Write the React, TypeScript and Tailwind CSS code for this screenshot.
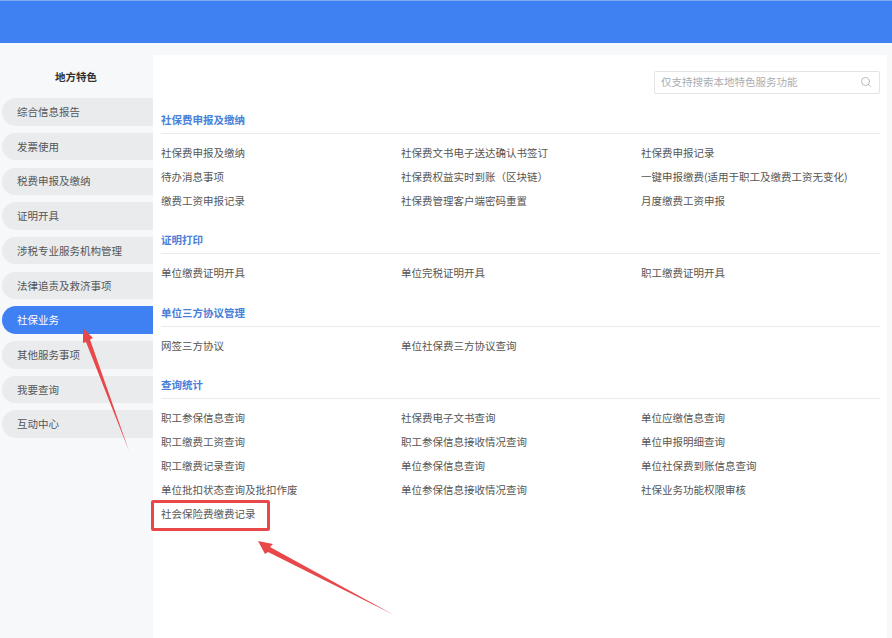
import React from "react";
import { Search } from "lucide-react";

const sidebar = ["综合信息报告","发票使用","税费申报及缴纳","证明开具","涉税专业服务机构管理","法律追责及救济事项","社保业务","其他服务事项","我要查询","互动中心"];

const sections: { title: string; items: string[] }[] = [
  { title: "社保费申报及缴纳", items: ["社保费申报及缴纳","社保费文书电子送达确认书签订","社保费申报记录","待办消息事项","社保费权益实时到账（区块链）","一键申报缴费(适用于职工及缴费工资无变化)","缴费工资申报记录","社保费管理客户端密码重置","月度缴费工资申报"] },
  { title: "证明打印", items: ["单位缴费证明开具","单位完税证明开具","职工缴费证明开具"] },
  { title: "单位三方协议管理", items: ["网签三方协议","单位社保费三方协议查询"] },
  { title: "查询统计", items: ["职工参保信息查询","社保费电子文书查询","单位应缴信息查询","职工缴费工资查询","职工参保信息接收情况查询","单位申报明细查询","职工缴费记录查询","单位参保信息查询","单位社保费到账信息查询","单位批扣状态查询及批扣作废","单位参保信息接收情况查询","社保业务功能权限审核","社会保险费缴费记录"] },
];

export default function App() {
  return (
    <div className="relative h-[638px] w-[892px] overflow-hidden bg-[#f6f8fa] text-[10.5px] text-[#555555] font-['Noto_Sans_CJK_SC','Microsoft_YaHei',sans-serif]">
      <header className="h-[43px] border-t border-[#7fa9f0] bg-[#3f80f3]" />
      <div className="flex h-[595px]">
        <aside className="w-[153px] shrink-0 pl-[2px] pt-[21px]">
          <h2 className="mb-[8.3px] h-[26px] pr-[3px] text-center text-[10.5px] font-bold leading-[26px] text-[#333333]">地方特色</h2>
          <ul>
            {sidebar.map((s) => (
              <li key={s} className={s === "社保业务"
                ? "mb-[7.3px] flex h-[27.4px] items-center rounded-l-full bg-[#3f80f3] pl-[15px] text-white"
                : "mb-[7.3px] flex h-[27.4px] items-center rounded-l-full bg-[#e9ebed] pl-[15px]"}>{s}</li>
            ))}
          </ul>
        </aside>
        <main className="mt-[12px] mr-[5px] flex-1 bg-white pl-[8px] pr-[7px] pt-[16px]">
          <div className="mb-[13px] flex justify-end">
            <div className="flex h-[23px] w-[226px] items-center justify-between rounded-[2px] border border-[#e2e5e8] pb-[2px] pl-[6px] pr-[7px] text-[#a8adb3]">
              <span>仅支持搜索本地特色服务功能</span>
              <Search size={12} strokeWidth={1.5} className="text-[#a0a4a9]" />
            </div>
          </div>
          {sections.map((sec) => (
            <section key={sec.title} className="mb-[14.3px]">
              <h3 className="h-[27px] border-b border-[#e8eaec] text-[10.5px] font-bold leading-[26px] text-[#4a80d8]">{sec.title}</h3>
              <div className="grid grid-cols-[240px_240px_1fr] pt-[7px]">
                {sec.items.map((it) => (
                  <a key={it} className="h-[24px] leading-[24px] text-[#555555]">{it}</a>
                ))}
              </div>
            </section>
          ))}
        </main>
      </div>
      {/* annotations */}
      <div className="absolute left-[151px] top-[500px] h-[31px] w-[119px] rounded-[2px] border-[3px] border-[#e8484a]" />
      <svg className="pointer-events-none absolute left-0 top-0" width="892" height="638" viewBox="0 0 892 638">
        <polygon points="83,328 93,338 90,339.5 129,451 86,342 83,343" fill="#e8484a" />
        <polygon points="258,541 273,544 270,547 394,615 268,552 265,554" fill="#e8484a" />
      </svg>
    </div>
  );
}
